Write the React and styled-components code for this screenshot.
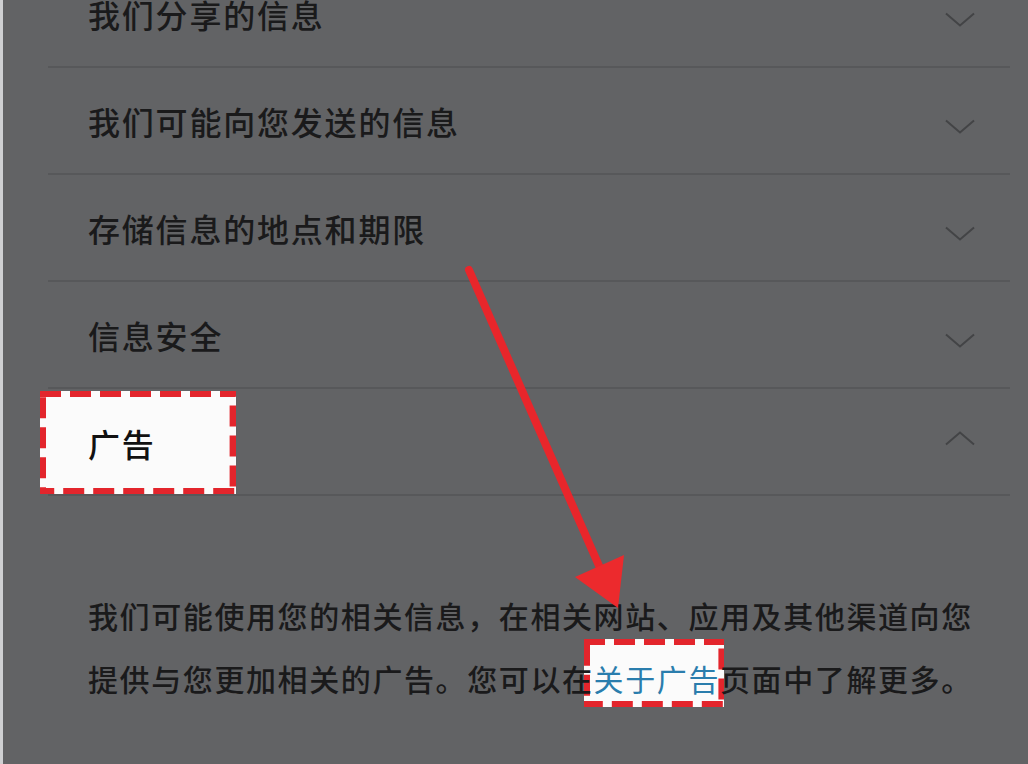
import React from "react";
import styled, { createGlobalStyle } from "styled-components";

const GlobalStyle = createGlobalStyle`
  html, body {
    margin: 0;
    padding: 0;
    background: #626365;
  }
  body {
    font-family: "Noto Sans CJK SC", "Noto Sans", sans-serif;
  }
`;

const Page = styled.div`
  position: relative;
  width: 1028px;
  height: 764px;
  overflow: hidden;
  box-sizing: border-box;
  border-left: 3px solid #cfd0d2;
  background: #626365;
  color: #1a1a1b;
`;

const List = styled.div`
  margin: -39px 18px 0 45px;
`;

const Row = styled.div`
  position: relative;
  z-index: 0;
  display: flex;
  align-items: center;
  justify-content: space-between;
  height: 105px;
  padding: 0 35px 0 40px;
  border-bottom: 2px solid #57585a;
`;

const Label = styled.span`
  position: relative;
  font-size: 32px;
  font-weight: 500;
  letter-spacing: 1.8px;
  ${(p) =>
    p.$highlight &&
    `
    align-self: stretch;
    display: flex;
    align-items: center;
    margin: 2px 0 0 -48px;
    padding: 0 80px 0 48px;
    color: #111;
  `}
`;

const Frame = styled.span`
  position: absolute;
  top: ${(p) => p.$top || 0}px;
  bottom: ${(p) => p.$bottom || 0}px;
  left: ${(p) => p.$left || 0}px;
  right: ${(p) => p.$right || 0}px;
  z-index: -1;
  background: #fbfbfb;
  svg {
    display: block;
    width: 100%;
    height: 100%;
  }
`;

const Chevron = styled.svg`
  width: 30px;
  height: 15px;
  margin-top: ${(p) => (p.$up ? "-6px" : "12px")};
  transform: ${(p) => (p.$up ? "scaleY(-1)" : "none")};
`;

const Body = styled.p`
  position: relative;
  z-index: 0;
  margin: 0;
  padding: 88px 0 0 85px;
  font-size: 30px;
  font-weight: 500;
  letter-spacing: 1.6px;
  line-height: 63px;
`;

const Mark = styled.span`
  position: relative;
  color: #2a7dad;
  font-weight: 400;
`;

const Arrow = styled.svg`
  position: absolute;
  top: 0;
  left: 0;
  z-index: 2;
  pointer-events: none;
`;

const DashedFrame = (props) => (
  <Frame {...props}>
    <svg>
      <rect
        x="0"
        y="0"
        width="100%"
        height="100%"
        fill="none"
        stroke="#e3252c"
        strokeWidth="12"
        strokeDasharray="21 9"
      />
    </svg>
  </Frame>
);

const Chev = ({ up }) => (
  <Chevron $up={up} viewBox="0 0 30 15">
    <polyline points="1,1.5 15,13.5 29,1.5" fill="none" stroke="#434446" strokeWidth="2" />
  </Chevron>
);

const items = ["我们分享的信息", "我们可能向您发送的信息", "存储信息的地点和期限", "信息安全"];

export default function App() {
  return (
    <>
      <GlobalStyle />
      <Page>
        <List>
          {items.map((t) => (
            <Row key={t}>
              <Label>{t}</Label>
              <Chev />
            </Row>
          ))}
          <Row>
            <Label $highlight>
              <DashedFrame />
              广告
            </Label>
            <Chev up />
          </Row>
        </List>
        <Body>
          我们可能使用您的相关信息，在相关网站、应用及其他渠道向您
          <br />
          提供与您更加相关的广告。您可以在
          <Mark>
            <DashedFrame $top={-17} $bottom={-7} $left={-10} $right={-4} />
            关于广告
          </Mark>
          页面中了解更多。
        </Body>
        <Arrow width="1028" height="764">
          <line x1="466" y1="270" x2="597" y2="568" stroke="#e8262b" strokeWidth="8" strokeLinecap="round" />
          <polygon points="572,577 621,555 615,608" fill="#ec2a2d" />
        </Arrow>
      </Page>
    </>
  );
}
